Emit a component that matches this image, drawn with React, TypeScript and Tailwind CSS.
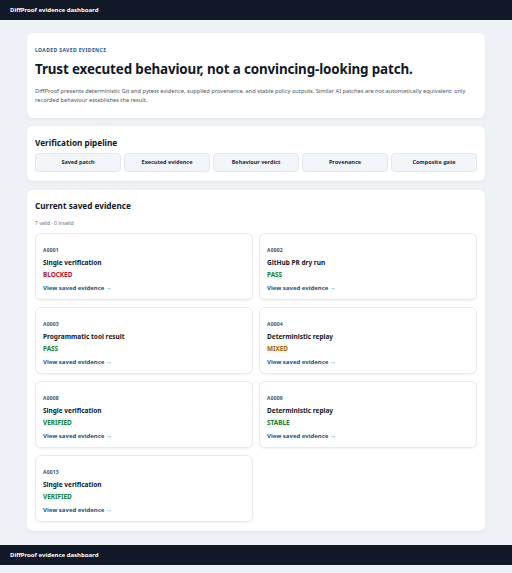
import React from "react";

type Evidence = {
  id: string;
  title: string;
  status: string;
  tone: "red" | "green" | "amber";
};

const stages = [
  "Saved patch",
  "Executed evidence",
  "Behaviour verdict",
  "Provenance",
  "Composite gate",
];

const evidence: Evidence[] = [
  { id: "A0001", title: "Single verification", status: "BLOCKED", tone: "red" },
  { id: "A0002", title: "GitHub PR dry run", status: "PASS", tone: "green" },
  { id: "A0003", title: "Programmatic tool result", status: "PASS", tone: "green" },
  { id: "A0004", title: "Deterministic replay", status: "MIXED", tone: "amber" },
  { id: "A0008", title: "Single verification", status: "VERIFIED", tone: "green" },
  { id: "A0009", title: "Deterministic replay", status: "STABLE", tone: "green" },
  { id: "A0013", title: "Single verification", status: "VERIFIED", tone: "green" },
];

const toneClass = {
  red: "text-[#9f1d35] bg-[#fdf0f2]",
  green: "text-[#1f7a3d] bg-[#eefaf1]",
  amber: "text-[#a3670c] bg-[#fdf6e3]",
};

const TopBar: React.FC = () => (
  <div className="h-[20px] bg-[#111827] flex items-center px-[10px]">
    <span className="text-white text-[6px] font-bold leading-none">
      DiffProof evidence dashboard
    </span>
  </div>
);

const EvidenceCard: React.FC<Evidence> = (props) => (
  <div className="h-[67px] rounded-[6px] bg-white border border-[#e6eaf0] shadow-[0_1px_2px_rgba(15,23,42,0.06)] px-[7px] pt-[13px]">
    <p className="text-[5px] leading-[6px] font-bold text-[#2e5578] tracking-[0.04em]">
      {props.id}
    </p>
    <h3 className="mt-[5px] text-[6.5px] leading-[9px] font-bold text-[#111827]">
      {props.title}
    </h3>
    <p className="mt-0 leading-[8px]">
      <span className={`text-[6.4px] font-bold ${toneClass[props.tone]}`}>
        {props.status}
      </span>
    </p>
    <p className="mt-[5px] text-[6px] leading-[8px] font-bold text-[#1f4f7c]">
      View saved evidence →
    </p>
  </div>
);

const App: React.FC = () => {
  return (
    <div
      className="min-h-screen bg-[#eef1f5] flex flex-col"
      style={{ fontFamily: '"Noto Sans", "Open Sans", sans-serif' }}
    >
      <TopBar />
      <main className="px-[27px] pt-[13px] flex flex-col gap-[8px]">
        <section className="rounded-[6px] bg-white shadow-[0_1px_3px_rgba(15,23,42,0.06)] px-[8px] pt-[14px] pb-[13px]">
          <p className="text-[5px] leading-[6px] font-bold uppercase tracking-[0.08em] text-[#265582]">
            Loaded saved evidence
          </p>
          <h1 className="mt-[6px] text-[13.4px] leading-[20px] font-bold text-[#111827] tracking-[-0.01em]">
            Trust executed behaviour, not a convincing-looking patch.
          </h1>
          <p className="mt-[8px] text-[5.7px] leading-[9px] text-[#4b5563]">
            DiffProof presents deterministic Git and pytest evidence, supplied
            provenance, and stable policy outputs. Similar AI patches are not
            automatically equivalent: only recorded behaviour establishes the
            result.
          </p>
        </section>

        <section className="rounded-[6px] bg-white shadow-[0_1px_3px_rgba(15,23,42,0.06)] px-[8px] pt-[11px] pb-[9px]">
          <h2 className="text-[8.2px] leading-[12px] font-bold text-[#111827]">
            Verification pipeline
          </h2>
          <div className="mt-[4px] grid grid-cols-5 gap-[3px]">
            {stages.map((stage) => (
              <div
                key={stage}
                className="h-[19px] rounded-[4px] bg-[#f2f5f9] border border-[#e3e8ef] flex items-center justify-center text-[5.5px] font-bold text-[#1f2937]"
              >
                {stage}
              </div>
            ))}
          </div>
        </section>

        <section className="mt-[1px] rounded-[6px] bg-white shadow-[0_1px_3px_rgba(15,23,42,0.06)] px-[8px] pt-[10px] pb-[9px]">
          <h2 className="text-[8.2px] leading-[12px] font-bold text-[#111827]">
            Current saved evidence
          </h2>
          <p className="mt-[7px] text-[5px] leading-[8px] text-[#6b7280]">
            7 valid · 0 invalid
          </p>
          <div className="mt-[6px] grid grid-cols-2 gap-x-[6px] gap-y-[7px]">
            {evidence.map((item) => (
              <EvidenceCard key={item.id} {...item} />
            ))}
          </div>
        </section>
      </main>
      <footer className="mt-[14px] mb-[8px]">
        <TopBar />
      </footer>
    </div>
  );
};

export default App;
